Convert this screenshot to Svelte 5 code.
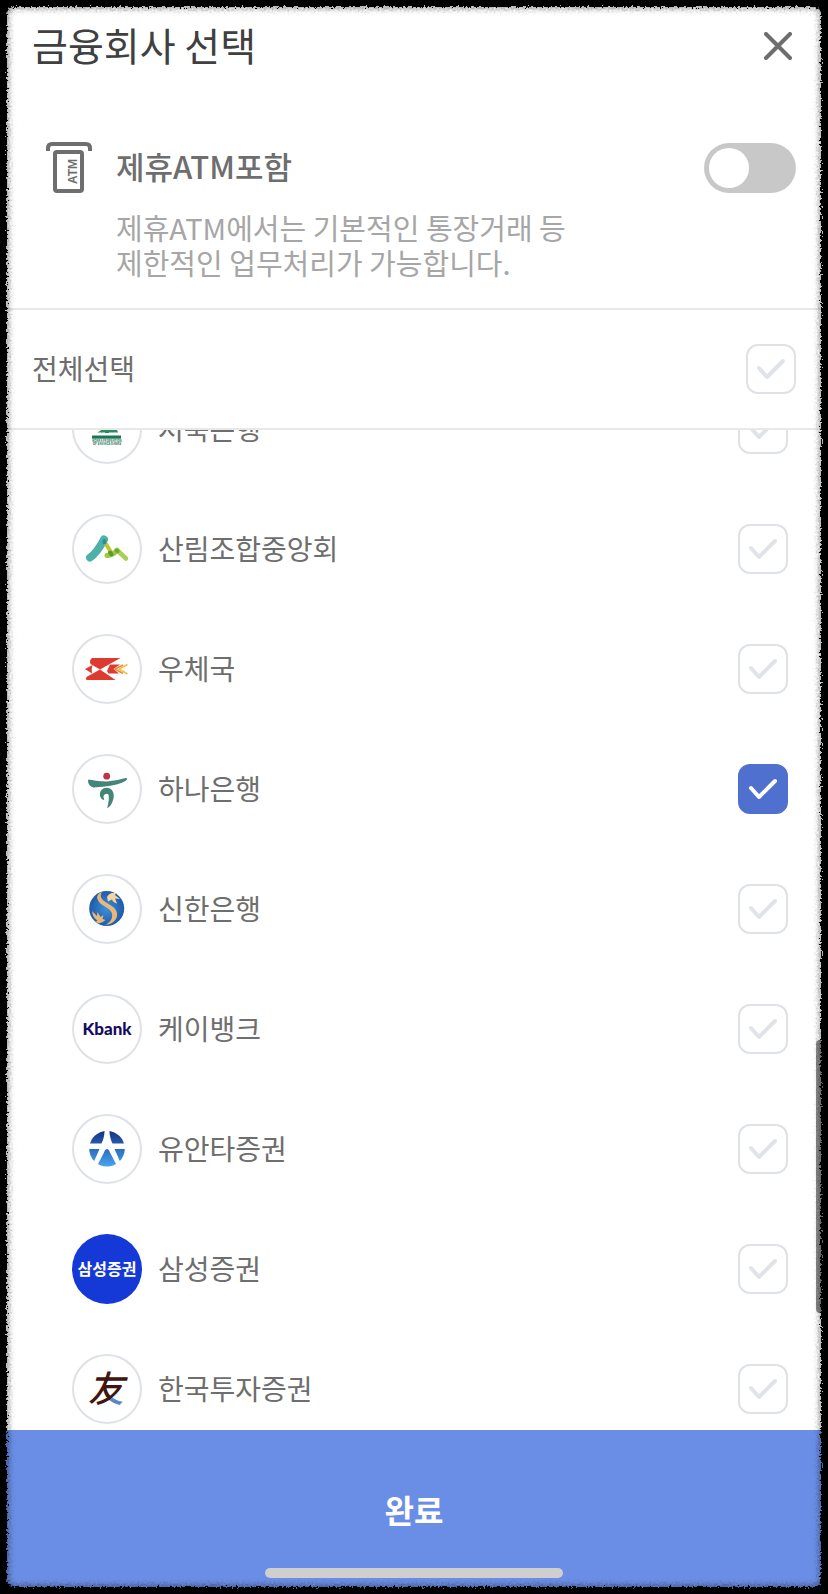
<script>
  import { onMount } from 'svelte';

  let list;
  let includeAtm = false;

  let banks = [
    { id: 'sb', name: '저축은행', checked: false },
    { id: 'nfcf', name: '산림조합중앙회', checked: false },
    { id: 'post', name: '우체국', checked: false },
    { id: 'hana', name: '하나은행', checked: true },
    { id: 'shinhan', name: '신한은행', checked: false },
    { id: 'kbank', name: '케이뱅크', checked: false },
    { id: 'yuanta', name: '유안타증권', checked: false },
    { id: 'samsung', name: '삼성증권', checked: false },
    { id: 'korea', name: '한국투자증권', checked: false }
  ];

  $: allChecked = banks.every((bank) => bank.checked);

  function toggleAll(event) {
    const checked = event.target.checked;
    banks = banks.map((bank) => ({ ...bank, checked }));
  }

  onMount(() => {
    list.scrollTop = 61;
  });
</script>

<main class="sheet">
  <header class="header">
    <h1>금융회사 선택</h1>
    <button class="close" type="button" aria-label="닫기">
      <svg viewBox="0 0 28 28" width="28" height="28">
        <path d="M2 2 26 26M26 2 2 26" fill="none" stroke="#6e6e6e" stroke-width="4" stroke-linecap="round" />
      </svg>
    </button>
  </header>

  <section class="atm">
    <svg class="atm-icon" viewBox="0 0 46 52" width="46" height="52" aria-hidden="true">
      <g fill="none" stroke="#6e6e6e" stroke-width="4">
        <path d="M2 9V6q0-4 4-4h34q4 0 4 4v3" />
        <rect x="9" y="10" width="27" height="39" rx="2" />
      </g>
      <text transform="translate(31 42) rotate(-90)" font-size="12" font-weight="700" fill="#6e6e6e">ATM</text>
    </svg>
    <div class="atm-text">
      <label for="atm">제휴ATM포함</label>
      <p>제휴ATM에서는 기본적인 통장거래 등<br />제한적인 업무처리가 가능합니다.</p>
    </div>
    <span class="toggle">
      <input id="atm" type="checkbox" role="switch" bind:checked={includeAtm} />
      <span class="knob"></span>
    </span>
  </section>

  <div class="all">
    <label for="all">전체선택</label>
    <span class="check">
      <input id="all" type="checkbox" checked={allChecked} on:change={toggleAll} />
      <svg viewBox="0 0 50 50"><path d="M13 24 21 33 37 17" /></svg>
    </span>
  </div>

  <div class="list-area">
    <ul class="list" bind:this={list}>
      {#each banks as bank (bank.id)}
        <li>
          <svg class="logo" viewBox="0 0 70 70" width="70" height="70" aria-hidden="true">
            {#if bank.id === 'samsung'}
              <circle cx="35" cy="35" r="35" fill="#1539d6" />
              <text x="35" y="41" font-size="16" font-weight="700" text-anchor="middle" fill="#fff">삼성증권</text>
            {:else}
              <circle cx="35" cy="35" r="34" fill="#fff" stroke="#dee2e7" stroke-width="2" />
            {/if}

            {#if bank.id === 'sb'}
              <path d="M20 41.500h29v3.200H20z" fill="#1f7458" />
              <path d="M33 28h4v11h-4zM25 38.500q5-2 8-7v5.500q-2 2-8 1.500z" fill="#2b8a5f" />
              <path d="M37 33q3 3.500 8 3l1 2.500H29l1-1.500h7z" fill="#2b8a5f" />
              <text x="35" y="48" font-size="3" font-weight="700" text-anchor="middle" fill="#1f7458">KOREA FEDERATION</text>
              <text x="35" y="51" font-size="3" font-weight="700" text-anchor="middle" fill="#1f7458">OF SAVINGS BANKS</text>
            {:else if bank.id === 'nfcf'}
              <g fill="none" stroke-linecap="round">
                <path d="M18 43.500Q25 39 32 25.500" stroke="#4db1aa" stroke-width="8" />
                <path d="M33 28.500 39.500 39" stroke="#bdc62f" stroke-width="4" />
                <path d="M45 36 54 44.500" stroke="#a9cf55" stroke-width="4.500" />
                <path d="M35 41.500Q41 41 45 36.500" stroke="#9cc840" stroke-width="5" />
                <path d="M38 38.500 39.500 40.500" stroke="#5b9a35" stroke-width="4" />
                <path d="M32.500 27v1.500" stroke="#2e8ea0" stroke-width="4" />
                <path d="M44.500 36.500l1 .5" stroke="#6cab34" stroke-width="4" />
              </g>
            {:else if bank.id === 'post'}
              <g fill="#de3b30">
                <path d="M20 24h28.500L28 35.500 18.500 30q-1.500-4 1.500-6z" />
                <path d="M28 35.500 43.500 46H14.500q-1.200-1.500 0-3z" />
                <path d="M13 35 20.500 31q-1.500 4-.5 8.500z" />
                <path d="M38 30.500h10L41.500 35l5.500 4.500H36.500L35 37z" />
              </g>
              <path d="M51 31 43 35l8 4.500" fill="none" stroke="#e98a32" stroke-width="1.500" />
              <path d="M55.500 30.500 47 35l8.500 5" fill="none" stroke="#f0bd45" stroke-width="1.500" />
            {:else if bank.id === 'hana'}
              <circle cx="34.700" cy="22.200" r="3.400" fill="#c0314b" />
              <path
                d="M16 26.500q0-1.200 2-.8 8 1.800 17 1.700 9-.4 17.500-3.200 3.500-.8 2.500 1.300-3 3.500-15 6.100-9 1.400-18.500 1.900-5.500-1.500-5.500-7z"
                fill="#438579"
              />
              <path
                d="M31.500 46C26 44 26.500 34 34.500 33.700c5 0 7.800 4.300 7.200 9.300-.8 5.500-3.200 9.500-6.500 11.300.8-4.300 2-7.800 1.600-12.300-.3-3.500-4.800-2.500-5.300.5-.2 1.500.8 2 .8 2.800z"
                fill="#438579"
              />
            {:else if bank.id === 'shinhan'}
              <defs>
                <radialGradient id="globe">
                  <stop offset="0" stop-color="#3c8fdc" />
                  <stop offset="1" stop-color="#1f5ba8" />
                </radialGradient>
              </defs>
              <circle cx="34.700" cy="34.500" r="17.500" fill="url(#globe)" />
              <path
                d="M30 18c-8 3-5 10 2 14 6 3.500 9 6 8 11-.6 4-4 6.500-7 8 8-.6 13-6 12-12-.8-5-6-7.500-10-10-5-3-8-6-5-11z"
                fill="#e9b878"
              />
              <path d="M35 23q3-5 9-4l-1 2 5 4-5-.5 2 5q-4-1-5-4l-4 2z" fill="#f7d3a2" />
              <path d="M20 37l5 5 .5-4 3 5 3-2-1 4 3 1q-5 5-10 2l2-1.500q-5-3-5.500-9.500z" fill="#e9b878" />
            {:else if bank.id === 'kbank'}
              <text class="kbank" x="35" y="41" font-size="17" text-anchor="middle" fill="#140c5f">Kbank</text>
            {:else if bank.id === 'yuanta'}
              <defs>
                <linearGradient id="sky" x1="0" y1="17" x2="0" y2="53" gradientUnits="userSpaceOnUse">
                  <stop offset="0" stop-color="#173184" />
                  <stop offset="0.5" stop-color="#2b6dbd" />
                  <stop offset="1" stop-color="#4aa7f2" />
                </linearGradient>
                <clipPath id="disc"><circle cx="35" cy="34.700" r="17.800" /></clipPath>
              </defs>
              <path
                clip-path="url(#disc)"
                d="M15 15h17.700q-.2 9-3.200 14.500H15zM55 15H37.300q.2 9 3.200 14.500H55zM15 35h12.500L22 47.500h-7zM55 35H42.500L48 47.500h7zM35 35q-2 0-3 3.500L26 50v4h18v-4l-6-11.500Q37 35 35 35z"
                fill="url(#sky)"
              />
            {:else if bank.id === 'korea'}
              <defs>
                <linearGradient id="ink" x1="18" y1="18" x2="52" y2="52" gradientUnits="userSpaceOnUse">
                  <stop offset="0.7" stop-color="#3d1710" />
                  <stop offset="0.7" stop-color="#5d86c8" />
                </linearGradient>
              </defs>
              <text x="34" y="48" font-size="36" font-weight="500" font-style="italic" text-anchor="middle" fill="url(#ink)">友</text>
            {/if}
          </svg>
          <label for={bank.id}>{bank.name}</label>
          <span class="check">
            <input id={bank.id} type="checkbox" bind:checked={bank.checked} />
            <svg viewBox="0 0 50 50"><path d="M13 24 21 33 37 17" /></svg>
          </span>
        </li>
      {/each}
    </ul>
    <span class="scroll-thumb"></span>
  </div>

  <footer class="footer">
    <button class="done" type="button">완료</button>
    <span class="home"></span>
  </footer>

  <!-- torn paper edge -->
  <svg class="filters" width="0" height="0" aria-hidden="true">
    <filter id="rough" x="0" y="0" width="100%" height="100%">
      <feTurbulence type="fractalNoise" baseFrequency="0.5" numOctaves="3" seed="4" result="noise" />
      <feDisplacementMap in="SourceGraphic" in2="noise" scale="7" xChannelSelector="R" yChannelSelector="G" />
    </filter>
  </svg>
  <div class="edge"></div>
</main>

<style>
  :global(body) {
    margin: 0;
    background: #000;
  }

  .sheet {
    position: relative;
    display: flex;
    flex-direction: column;
    height: 100vh;
    box-sizing: border-box;
    overflow: hidden;
    background: #fff;
    color: #6e6e6e;
    font-family: 'Noto Sans CJK KR', sans-serif;
    font-size: 28px;
  }

  .header {
    display: flex;
    align-items: flex-start;
    justify-content: space-between;
    padding: 14px 32px 0;
  }

  h1 {
    margin: 0;
    font-size: 39px;
    font-weight: 400;
    line-height: 60px;
    color: #404040;
  }

  .close {
    display: flex;
    margin-top: 14px;
    padding: 4px;
    border: 0;
    background: none;
    cursor: pointer;
  }

  .atm {
    display: flex;
    align-items: flex-start;
    padding: 68px 32px 28px 46px;
    border-bottom: 2px solid #e8e8e8;
  }

  .atm-icon {
    flex: none;
    margin-right: 24px;
    font-family: 'Liberation Sans', sans-serif;
  }

  .atm-text {
    flex: 1;
  }

  .atm-text label {
    display: block;
    font-size: 31px;
    font-weight: 500;
    line-height: 48px;
  }

  .atm-text p {
    margin: 20px 0 0;
    font-size: 29px;
    font-weight: 400;
    line-height: 35px;
    color: #a6a6a6;
  }

  .toggle {
    position: relative;
    width: 92px;
    height: 50px;
    margin-top: 1px;
  }

  .toggle input {
    width: 100%;
    height: 100%;
    margin: 0;
    border-radius: 25px;
    background: #c8c8c8;
    appearance: none;
    cursor: pointer;
  }

  .toggle input:checked {
    background: #5070d0;
  }

  .knob {
    position: absolute;
    top: 5px;
    left: 5px;
    width: 40px;
    height: 40px;
    border-radius: 50%;
    background: #fff;
    pointer-events: none;
    transition: left 0.2s ease;
  }

  .toggle input:checked + .knob {
    left: 47px;
  }

  .all {
    display: flex;
    align-items: center;
    justify-content: space-between;
    height: 118px;
    padding: 0 32px;
    border-bottom: 2px solid #e8e8e8;
  }

  .all label,
  li label {
    padding-bottom: 2px;
  }

  .check {
    position: relative;
    width: 50px;
    height: 50px;
  }

  .check input {
    width: 100%;
    height: 100%;
    margin: 0;
    box-sizing: border-box;
    border: 2px solid #dee2e7;
    border-radius: 12px;
    background: #fff;
    appearance: none;
    cursor: pointer;
  }

  .check svg {
    position: absolute;
    inset: 0;
    fill: none;
    stroke: #e0e3e8;
    stroke-width: 4;
    stroke-linecap: round;
    stroke-linejoin: round;
    pointer-events: none;
  }

  .check input:checked {
    border-color: #5070d0;
    background: #5070d0;
  }

  .check input:checked + svg {
    stroke: #fff;
  }

  .list-area {
    position: relative;
    flex: 1;
    min-height: 0;
  }

  .list {
    height: 100%;
    margin: 0;
    padding: 0;
    overflow-y: auto;
    list-style: none;
    scrollbar-width: none;
  }

  li {
    display: flex;
    align-items: center;
    height: 120px;
    padding: 0 40px 0 72px;
  }

  li label {
    flex: 1;
    margin-left: 16px;
  }

  .logo {
    flex: none;
  }

  .kbank {
    font-family: Lato, sans-serif;
    font-weight: 900;
  }

  .scroll-thumb {
    position: absolute;
    top: 61%;
    right: 4px;
    width: 8px;
    height: 273px;
    border-radius: 4px;
    background: #8a8a8a;
  }

  .footer {
    display: flex;
    flex-direction: column;
    align-items: center;
    padding-bottom: 16px;
    background: #6a8ee5;
  }

  .done {
    width: 100%;
    height: 138px;
    padding: 20px 0 0;
    border: 0;
    background: none;
    color: #fff;
    font-family: inherit;
    font-size: 32px;
    font-weight: 700;
    cursor: pointer;
  }

  .home {
    width: 36%;
    height: 10px;
    border-radius: 5px;
    background: #cfcfcf;
  }

  .filters {
    position: absolute;
  }

  .edge {
    position: absolute;
    inset: -8px;
    border: 15px solid #000;
    border-radius: 22px;
    box-shadow: inset 0 0 6px 1px rgba(0, 0, 0, 0.5);
    filter: url(#rough);
    pointer-events: none;
  }
</style>
